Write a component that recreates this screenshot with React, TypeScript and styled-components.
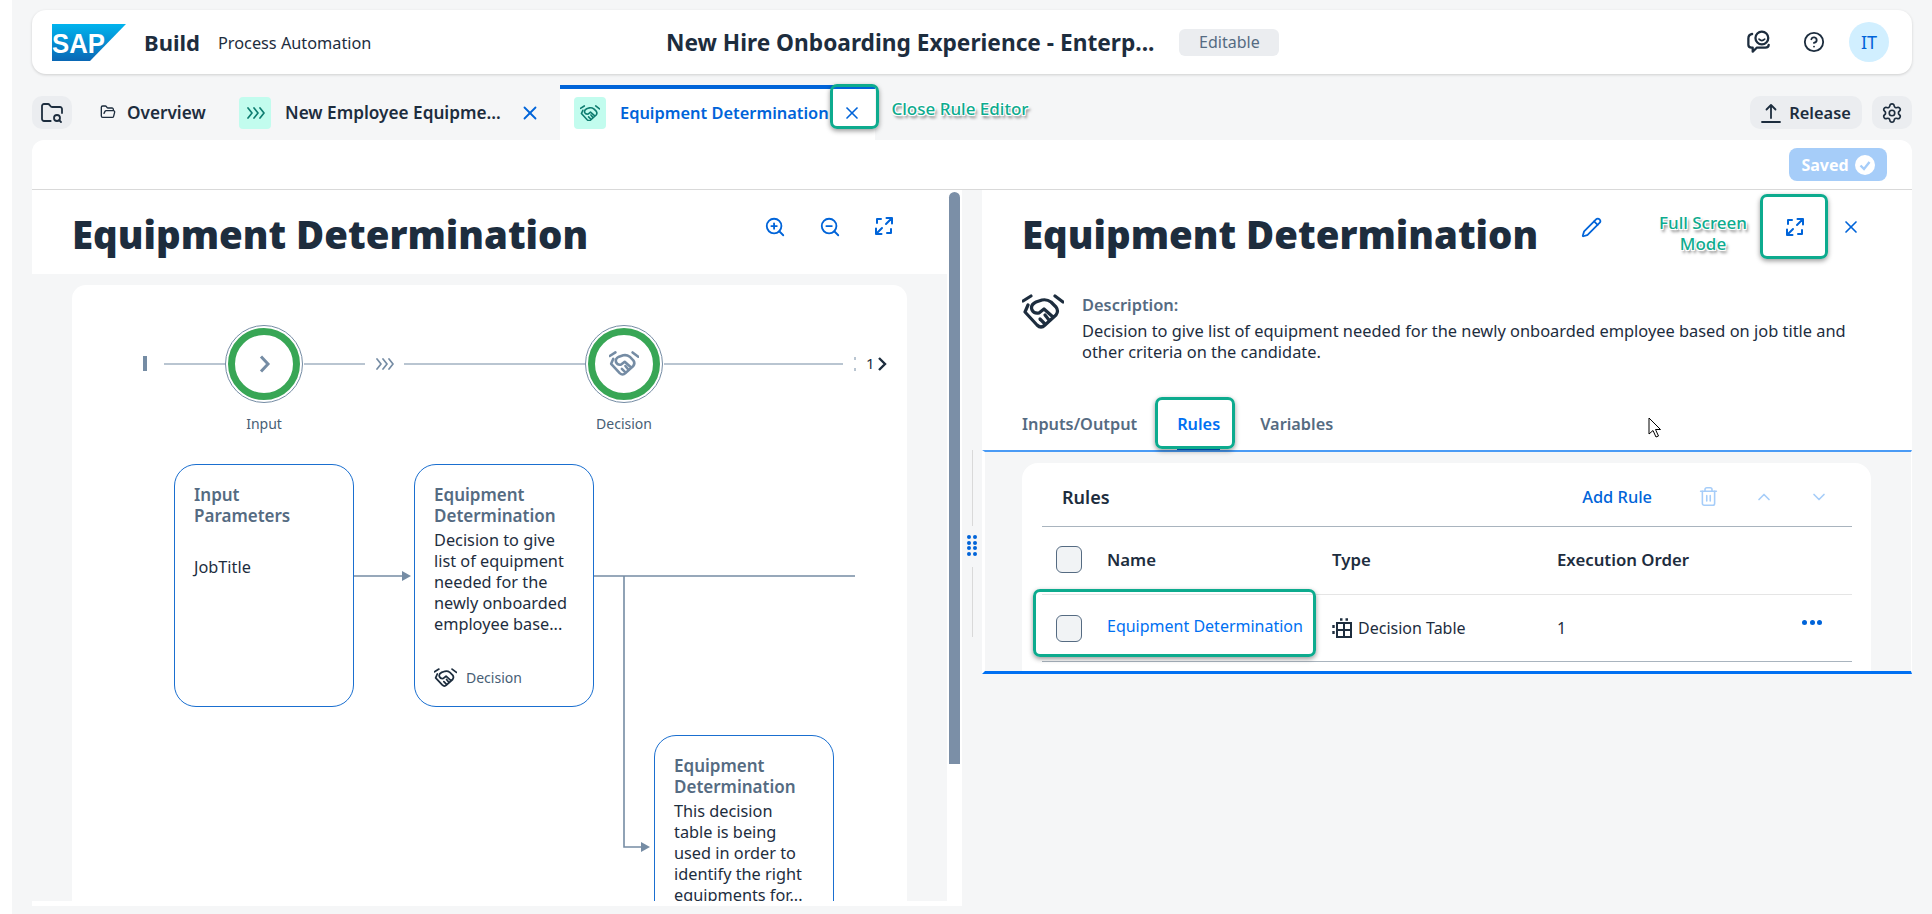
import React from "react";
import styled, { createGlobalStyle } from "styled-components";
import {
	ChevronDown,
	ChevronUp,
	CircleHelp,
	FolderOpen,
	FolderSearch,
	Pencil,
	Settings,
	Trash2,
	X,
	ZoomIn,
	ZoomOut,
} from "lucide-react";

const BLUE = "#0064d9";
const INK = "#1d2d3e";
const MUTED = "#556b82";
const PAGE = "#f5f6f7";
const LINE = "#758ca4";
const GREEN = "#0dab8e";

const GlobalStyle = createGlobalStyle`
	html, body {
		margin: 0;
		padding: 0;
		background: #ffffff;
	}
	body {
		font-family: "Noto Sans", "Liberation Sans", sans-serif;
		color: ${INK};
	}
	* {
		box-sizing: border-box;
	}
`;

const Shell = styled.div`
	position: relative;
	width: 1920px;
	height: 914px;
	margin-left: 12px;
	padding: 10px 20px 8px 20px;
	background: ${PAGE};
	overflow: hidden;
`;

/* top bar */
const Header = styled.header`
	height: 64px;
	display: flex;
	align-items: center;
	padding: 0 23px 0 20px;
	background: #ffffff;
	border-radius: 14px;
	box-shadow: 0 1px 3px rgba(0, 0, 0, 0.16);
`;

const Brand = styled.div`
	width: 614px;
	display: flex;
	align-items: center;
	flex: none;
`;

const BuildName = styled.span`
	margin-left: 18px;
	font-size: 22px;
	font-weight: 700;
`;

const ProductName = styled.span`
	margin-left: 18px;
	margin-top: 2px;
	font-size: 16.3px;
`;

const ProjectName = styled.span`
	font-size: 22.7px;
	font-weight: 700;
	white-space: nowrap;
`;

const StatusBadge = styled.span`
	width: 100px;
	height: 27px;
	margin-left: 25px;
	display: flex;
	align-items: center;
	justify-content: center;
	border-radius: 6px;
	background: #ebedf0;
	color: ${MUTED};
	font-size: 16px;
`;

const HeaderActions = styled.div`
	margin-left: auto;
	display: flex;
	align-items: center;
	gap: 24px;
`;

const FeedbackSlot = styled.span`
	display: flex;
	margin-right: 8px;
`;

const Avatar = styled.div`
	width: 40px;
	height: 40px;
	display: flex;
	align-items: center;
	justify-content: center;
	border-radius: 50%;
	background: #d1efff;
	color: ${BLUE};
	font-size: 18px;
`;

/* tab strip */
const TabStrip = styled.nav`
	height: 55px;
	margin-top: 11px;
	display: flex;
	align-items: flex-start;
`;

const GrayButton = styled.button<{ $width: number }>`
	width: ${p => p.$width}px;
	height: 33px;
	margin-top: 11px;
	padding: 0;
	display: flex;
	align-items: center;
	justify-content: center;
	gap: 8px;
	border: 0;
	border-radius: 10px;
	background: #ebedf0;
	color: ${INK};
	font-family: inherit;
	font-size: 16.4px;
	font-weight: 600;
`;

const Tab = styled.div<{ $width: number; $active?: boolean }>`
	width: ${p => p.$width}px;
	height: 55px;
	display: flex;
	align-items: center;
	flex: none;
	font-size: ${p => (p.$active ? 16.4 : 17.2)}px;
	font-weight: 600;
	white-space: nowrap;
	padding-bottom: 3px;
	color: ${p => (p.$active ? BLUE : INK)};
	background: ${p => (p.$active ? "#ffffff" : "transparent")};
	border-top: 4px solid ${p => (p.$active ? BLUE : "transparent")};
`;

const TabIconBox = styled.span<{ $left?: number }>`
	width: 32px;
	height: 32px;
	flex: none;
	margin-left: ${p => p.$left ?? 0}px;
	display: flex;
	align-items: center;
	justify-content: center;
	border-radius: 4px;
	background: #c2fcee;
	color: #0f7d71;
`;

const TabLabel = styled.span<{ $left: number }>`
	margin-left: ${p => p.$left}px;
	margin-top: -2px;
	display: flex;
`;

const TabClose = styled.span<{ $right: number }>`
	margin-left: auto;
	margin-right: ${p => p.$right}px;
	display: flex;
	color: ${BLUE};
`;

const StripEnd = styled.div`
	margin-left: auto;
	display: flex;
	gap: 10px;
`;

/* main editor */
const Editor = styled.main`
	height: 766px;
	display: flex;
	flex-direction: column;
	background: #ffffff;
	border-radius: 12px 12px 0 0;
`;

const EditorBar = styled.div`
	height: 50px;
	flex: none;
	display: flex;
	align-items: center;
	justify-content: flex-end;
	padding-right: 25px;
	border-bottom: 1px solid #d9d9d9;
`;

const SavedButton = styled.div`
	width: 98px;
	height: 33px;
	display: flex;
	align-items: center;
	justify-content: center;
	gap: 6px;
	border-radius: 8px;
	background: #a6cdf9;
	color: #ffffff;
	font-size: 16px;
	font-weight: 700;
`;

const Split = styled.div`
	flex: 1;
	min-height: 0;
	display: flex;
`;

const LeftPane = styled.section`
	width: 917px;
	flex: none;
	display: flex;
	flex-direction: column;
	padding-right: 2px;
	padding-bottom: 5px;
`;

const TitleBand = styled.div`
	height: 84px;
	flex: none;
	display: flex;
	align-items: center;
	padding: 4px 53px 0 40px;
	justify-content: space-between;
`;

const BigTitle = styled.h1`
	margin: 0;
	color: ${INK};
	font-size: 38.4px;
	line-height: 48px;
	font-weight: 900;
	letter-spacing: 0;
	white-space: nowrap;
`;

const ZoomTools = styled.div`
	display: flex;
	gap: 33px;
	color: ${BLUE};
	margin-top: -14px;
`;

const CanvasArea = styled.div`
	flex: 1;
	min-height: 0;
	padding: 11px 40px 0;
	background: ${PAGE};
`;

const CanvasCard = styled.div`
	height: 100%;
	display: flex;
	flex-direction: column;
	background: #ffffff;
	border-radius: 14px 14px 0 0;
`;

const Stepper = styled.div`
	position: relative;
	height: 164px;
	flex: none;
`;

const StepLabel = styled.span<{ $x: number }>`
	position: absolute;
	top: 130px;
	left: ${p => p.$x}px;
	transform: translateX(-50%);
	font-size: 14px;
	line-height: 18px;
	color: #475e75;
`;

const StepCount = styled.span`
	position: absolute;
	top: 68px;
	left: 794px;
	font-size: 15px;
	line-height: 20px;
`;

const Graph = styled.div`
	position: relative;
	flex: 1;
	width: 783px;
	overflow: hidden;
`;

const GraphLines = styled.svg`
	position: absolute;
	top: 0;
	left: 0;
`;

const NodeCard = styled.div<{ $x: number; $y: number; $h: number }>`
	position: absolute;
	left: ${p => p.$x}px;
	top: ${p => p.$y}px;
	width: 180px;
	height: ${p => p.$h}px;
	display: flex;
	flex-direction: column;
	padding: 19px 20px 19px 19px;
	background: #ffffff;
	border: 1px solid #1a6fd0;
	border-radius: 22px;
`;

const NodeTitle = styled.div`
	font-size: 17px;
	line-height: 21px;
	font-weight: 600;
	color: ${MUTED};
`;

const NodeText = styled.div<{ $gap: number }>`
	margin-top: ${p => p.$gap}px;
	font-size: 16.3px;
	line-height: 21px;
`;

const NodeFoot = styled.div`
	margin-top: auto;
	display: flex;
	align-items: center;
	gap: 9px;
	font-size: 14px;
	color: #475e75;
`;

const ScrollGutter = styled.div`
	width: 13px;
	flex: none;
	padding: 2px 2px 0 0;
`;

const ScrollThumb = styled.div`
	height: 572px;
	border-radius: 6px 6px 0 0;
	background: #7b8fa7;
`;

const Divider = styled.div`
	width: 20px;
	flex: none;
	display: flex;
	flex-direction: column;
	align-items: center;
	background: ${PAGE};
	padding: 260px 0 0;
`;

const DividerLine = styled.span<{ $h: number }>`
	width: 1px;
	height: ${p => p.$h}px;
	background: #d9d9d9;
`;

const DragDots = styled.span`
	margin: 9px 0 11px;
	display: grid;
	grid-template-columns: 4px 4px;
	gap: 1.5px 2px;

	i {
		width: 4px;
		height: 4px;
		border-radius: 50%;
		background: ${BLUE};
	}
`;

const RightPane = styled.section`
	flex: 1;
	min-width: 0;
	display: flex;
	flex-direction: column;
	background: ${PAGE};
`;

const RightTop = styled.div`
	height: 260px;
	flex: none;
	display: flex;
	flex-direction: column;
	padding: 0 0 0 40px;
	background: #ffffff;
`;

const RightHeading = styled.div`
	height: 84px;
	flex: none;
	display: flex;
	align-items: center;
	padding-top: 4px;
	color: ${BLUE};
`;

const HeadingAction = styled.span<{ $left: number }>`
	margin: -14px 0 0 ${p => p.$left}px;
	display: flex;
`;

const DescriptionRow = styled.div`
	margin-top: 20px;
	display: flex;
	gap: 18px;
`;

const DescriptionBody = styled.div`
	width: 790px;
	font-size: 16.4px;
	line-height: 21px;
`;

const DescriptionLabel = styled.div`
	font-weight: 600;
	color: ${MUTED};
	margin-bottom: 5px;
`;

const PaneTabs = styled.div`
	margin-top: auto;
	display: flex;
	height: 44px;
	gap: 40px;
`;

const PaneTab = styled.div<{ $active?: boolean }>`
	height: 44px;
	display: flex;
	align-items: center;
	font-size: 16.3px;
	font-weight: 600;
	color: ${p => (p.$active ? "#0070f2" : MUTED)};
	border-bottom: 3px solid ${p => (p.$active ? BLUE : "transparent")};
	padding-bottom: 5px;
`;

const RulesSection = styled.div`
	height: 224px;
	flex: none;
	padding: 11px 40px 0 37px;
	border-top: 2px solid #4a9bf5;
	border-bottom: 3px solid #0070f2;
	border-left: 3px solid #ffffff;
	border-right: 1px solid #ffffff;
	overflow: hidden;
`;

const RulesCard = styled.div`
	height: 230px;
	padding: 0 19px 0 20px;
	background: #ffffff;
	border-radius: 16px;
`;

const RulesHead = styled.div`
	height: 64px;
	display: flex;
	align-items: center;
	padding: 4px 0 0 20px;
	border-bottom: 1px solid #a9b4be;
`;

const RulesTitle = styled.h2`
	margin: 0;
	font-size: 18px;
	font-weight: 600;
`;

const RulesTools = styled.div`
	margin-left: auto;
	display: flex;
	align-items: center;
	color: #a6cdf9;
	padding-right: 23px;
	gap: 35px;
`;

const AddRule = styled.span`
	margin-right: 11px;
	color: ${BLUE};
	font-size: 16.4px;
	font-weight: 500;
`;

const RuleGrid = styled.div<{ $head?: boolean }>`
	display: grid;
	grid-template-columns: 65px 225px 225px 1fr 50px;
	align-items: center;
	height: ${p => (p.$head ? 68 : 67)}px;
	padding-bottom: ${p => (p.$head ? 3 : 0)}px;
	border-bottom: 1px solid ${p => (p.$head ? "#e5e5e5" : "#a9b4be")};
	font-size: ${p => (p.$head ? 16.8 : 16)}px;
	font-weight: ${p => (p.$head ? 600 : 400)};
`;

const CheckCell = styled.span`
	width: 26px;
	height: 27px;
	margin-left: 14px;
	border: 1px solid ${MUTED};
	border-radius: 6px;
	background: #f1f3f5;
`;

const RuleLink = styled.span`
	margin-top: -4px;
	color: #0070f2;
	white-space: nowrap;
`;

const TypeCell = styled.span`
	display: flex;
	align-items: center;
	gap: 6px;
`;

const MoreDots = styled.span`
	display: flex;
	gap: 2.5px;
	margin-top: -12px;

	i {
		width: 5px;
		height: 5px;
		border-radius: 50%;
		background: ${BLUE};
	}
`;

/* tutorial overlays */
const Callout = styled.div<{ $x: number; $y: number; $w: number; $h: number }>`
	position: absolute;
	left: ${p => p.$x - 12}px;
	top: ${p => p.$y}px;
	width: ${p => p.$w}px;
	height: ${p => p.$h}px;
	border: 3px solid ${GREEN};
	border-radius: 7px;
	box-shadow: 0 2px 5px rgba(0, 0, 0, 0.4);
`;

const CalloutNote = styled.div<{ $x: number; $y: number; $w: number }>`
	position: absolute;
	left: ${p => p.$x - 12}px;
	top: ${p => p.$y}px;
	width: ${p => p.$w}px;
	color: ${GREEN};
	font-size: 17px;
	line-height: 21px;
	font-weight: 500;
	text-align: center;
	text-shadow: -1px -1px 0 #fff, 1px -1px 0 #fff, -1px 1px 0 #fff, 1px 1px 0 #fff,
		0 0 2px #fff, 2px 3px 3px rgba(0, 0, 0, 0.55);
`;

const Pointer = styled.svg`
	position: absolute;
	left: 1636px;
	top: 417px;
`;

const SapLogo = () => (
	<svg width="74" height="37" viewBox="0 0 74 37">
		<defs>
			<linearGradient id="sapFill" x1="0" y1="0" x2="0" y2="1">
				<stop offset="0" stopColor="#00b4ee" />
				<stop offset="1" stopColor="#0a67b5" />
			</linearGradient>
		</defs>
		<polygon points="0,0 74,0 38,37 0,37" fill="url(#sapFill)" />
		<text
			x="0"
			y="29"
			fill="#ffffff"
			fontFamily="Liberation Sans"
			fontWeight="700"
			fontSize="27"
			textLength="53"
			lengthAdjust="spacingAndGlyphs"
		>
			SAP
		</text>
	</svg>
);

const Handshake = ({ size = 42, color = INK, stroke = 3.2 }: { size?: number; color?: string; stroke?: number }) => (
	<svg width={size} height={(size * 35) / 42} viewBox="0 0 42 35" fill="none" stroke={color} strokeWidth={stroke} strokeLinecap="round" strokeLinejoin="round">
		<path d="M1 7 9 2" />
		<path d="M33 2 41 8" />
		<path d="M6 11 3 18 15 31Q19 35 23 31L34 21Q37 17 34 13L29 8Q25 5 20 6L14 8Q8 11 10 16 12 20 17 19L22 15 31 23" />
		<path d="M18 25 23 30" />
		<path d="M23 21 27 26" />
	</svg>
);

const ExpandIcon = () => (
	<svg width="20" height="20" viewBox="0 0 20 20" fill="none" stroke={BLUE} strokeWidth="2" strokeLinecap="round" strokeLinejoin="round">
		<path d="M12.5 2H18V7.5M18 2 12 8" />
		<path d="M2 12.5V18H7.5M2 18 8 12" />
		<path d="M7 3H3V7" />
		<path d="M17 13V17H13" />
	</svg>
);

const TripleChevron = ({ color = "currentColor" }: { color?: string }) => (
	<svg width="19" height="12" viewBox="0 0 19 12" fill="none" stroke={color} strokeWidth="1.7" strokeLinecap="round" strokeLinejoin="round">
		<path d="M2 1 6 6 2 11" />
		<path d="M8 1 12 6 8 11" />
		<path d="M14 1 18 6 14 11" />
	</svg>
);

const FeedbackIcon = () => (
	<svg width="24" height="24" viewBox="0 0 21 21" fill="none" stroke={INK} strokeWidth="2" strokeLinecap="round" strokeLinejoin="round">
		<circle cx="13" cy="7" r="5.6" />
		<path d="M10.5 8Q13 10.5 15.5 8" strokeWidth="1.4" />
		<path d="M4.5 3.5Q1.2 4 1.2 7.5V13Q1.2 15.5 4 15.5H5V19L8.5 15.5H16Q19 15.5 19 13" />
	</svg>
);

const SaveCheck = () => (
	<svg width="20" height="20" viewBox="0 0 20 20">
		<circle cx="10" cy="10" r="10" fill="#ffffff" />
		<path d="M5.5 10.5 9 14 14.5 7" fill="none" stroke="#a6cdf9" strokeWidth="2.4" />
	</svg>
);

const UploadIcon = () => (
	<svg width="20" height="20" viewBox="0 0 20 20" fill="none" stroke={INK} strokeWidth="1.8" strokeLinecap="round" strokeLinejoin="round">
		<path d="M10 15V2M5.5 6.5 10 2l4.5 4.5" />
		<path d="M1 19H19" />
	</svg>
);

const TableIcon = () => (
	<svg width="20" height="20" viewBox="0 0 20 20" fill="none" stroke={INK} strokeWidth="2">
		<rect x="5" y="5" width="14" height="14" />
		<path d="M12 5V19M5 12H19" />
		<path d="M1.5 7V10M1.5 13V16M8 1.5H10.5M13.5 1.5H16" strokeWidth="2.4" />
	</svg>
);

const StepRing = ({ cx }: { cx: number }) => (
	<>
		<circle cx={cx} cy="79" r="38.5" fill="#ffffff" stroke={LINE} strokeWidth="1" />
		<circle cx={cx} cy="79" r="32.5" fill="#ffffff" stroke="#38a655" strokeWidth="7" />
	</>
);

const StepperDrawing = () => (
	<svg width="835" height="164" viewBox="0 0 835 164" fill="none">
		<rect x="71" y="71" width="4" height="15" fill={LINE} />
		<path d="M92 79H154M232 79H293M332 79H513M592 79H771" stroke={LINE} strokeWidth="1.2" />
		<path d="M783 72v3M783 83v3" stroke={LINE} strokeWidth="1" />
		<StepRing cx={192} />
		<path d="M189 71.5 196 79 189 86.5" stroke={LINE} strokeWidth="3" />
		<svg x="303" y="73" width="19" height="12">
			<TripleChevron color={LINE} />
		</svg>
		<StepRing cx={552} />
		<svg x="537" y="66" width="30" height="26">
			<Handshake size={30} color={LINE} stroke={3.6} />
		</svg>
		<path d="M807 73 813 79 807 85" stroke={INK} strokeWidth="2.4" />
	</svg>
);

const Connectors = () => (
	<GraphLines width="783" height="452" viewBox="0 0 783 452" fill="none">
		<path d="M281 127H332M521 127H783M552 127V398H572" stroke={LINE} strokeWidth="1.6" />
		<path d="M330 122 339 127 330 132Z" fill={LINE} />
		<path d="M569 393 578 398 569 403Z" fill={LINE} />
	</GraphLines>
);

export default function App() {
	return (
		<>
			<GlobalStyle />
			<Shell>
				<Header>
					<Brand>
						<SapLogo />
						<BuildName>Build</BuildName>
						<ProductName>Process Automation</ProductName>
					</Brand>
					<ProjectName>New Hire Onboarding Experience - Enterp...</ProjectName>
					<StatusBadge>Editable</StatusBadge>
					<HeaderActions>
						<FeedbackSlot>
							<FeedbackIcon />
						</FeedbackSlot>
						<CircleHelp size={22} strokeWidth={2} />
						<Avatar>IT</Avatar>
					</HeaderActions>
				</Header>

				<TabStrip>
					<GrayButton $width={40}>
						<FolderSearch size={24} strokeWidth={1.8} />
					</GrayButton>
					<Tab $width={167}>
						<TabLabel $left={28}>
							<FolderOpen size={16} strokeWidth={2} />
						</TabLabel>
						<TabLabel $left={11}>Overview</TabLabel>
					</Tab>
					<Tab $width={321}>
						<TabIconBox>
							<TripleChevron />
						</TabIconBox>
						<TabLabel $left={14}>New Employee Equipme...</TabLabel>
						<TabClose $right={19}>
							<X size={22} strokeWidth={2} />
						</TabClose>
					</Tab>
					<Tab $width={315} $active>
						<TabIconBox $left={14}>
							<Handshake size={20} color="#0f7d71" stroke={3.4} />
						</TabIconBox>
						<TabLabel $left={14}>Equipment Determination</TabLabel>
						<TabClose $right={13}>
							<X size={20} strokeWidth={2} />
						</TabClose>
					</Tab>
					<StripEnd>
						<GrayButton $width={112}>
							<UploadIcon />
							Release
						</GrayButton>
						<GrayButton $width={40}>
							<Settings size={22} strokeWidth={1.8} />
						</GrayButton>
					</StripEnd>
				</TabStrip>

				<Editor>
					<EditorBar>
						<SavedButton>
							Saved
							<SaveCheck />
						</SavedButton>
					</EditorBar>
					<Split>
						<LeftPane>
							<TitleBand>
								<BigTitle>Equipment Determination</BigTitle>
								<ZoomTools>
									<ZoomIn size={22} strokeWidth={2} />
									<ZoomOut size={22} strokeWidth={2} />
									<ExpandIcon />
								</ZoomTools>
							</TitleBand>
							<CanvasArea>
								<CanvasCard>
									<Stepper>
										<StepperDrawing />
										<StepLabel $x={192}>Input</StepLabel>
										<StepLabel $x={552}>Decision</StepLabel>
										<StepCount>1</StepCount>
									</Stepper>
									<Graph>
										<Connectors />
										<NodeCard $x={102} $y={15} $h={243}>
											<NodeTitle>
												Input
												<br />
												Parameters
											</NodeTitle>
											<NodeText $gap={31}>JobTitle</NodeText>
										</NodeCard>
										<NodeCard $x={342} $y={15} $h={243}>
											<NodeTitle>Equipment Determination</NodeTitle>
											<NodeText $gap={4}>
												Decision to give list of equipment needed for the newly onboarded employee base...
											</NodeText>
											<NodeFoot>
												<Handshake size={23} stroke={3.2} />
												Decision
											</NodeFoot>
										</NodeCard>
										<NodeCard $x={582} $y={286} $h={300}>
											<NodeTitle>Equipment Determination</NodeTitle>
											<NodeText $gap={4}>
												This decision table is being used in order to identify the right equipments for...
											</NodeText>
										</NodeCard>
									</Graph>
								</CanvasCard>
							</CanvasArea>
						</LeftPane>

						<ScrollGutter>
							<ScrollThumb />
						</ScrollGutter>

						<Divider>
							<DividerLine $h={76} />
							<DragDots>
								{Array.from({ length: 8 }, (_, i) => (
									<i key={i} />
								))}
							</DragDots>
							<DividerLine $h={70} />
						</Divider>

						<RightPane>
							<RightTop>
								<RightHeading>
									<BigTitle>Equipment Determination</BigTitle>
									<HeadingAction $left={43}>
										<Pencil size={21} strokeWidth={2} />
									</HeadingAction>
									<HeadingAction $left={183}>
										<ExpandIcon />
									</HeadingAction>
									<HeadingAction $left={36}>
										<X size={20} strokeWidth={2} />
									</HeadingAction>
								</RightHeading>
								<DescriptionRow>
									<Handshake />
									<DescriptionBody>
										<DescriptionLabel>Description:</DescriptionLabel>
										Decision to give list of equipment needed for the newly onboarded employee based on job title and other criteria on the candidate.
									</DescriptionBody>
								</DescriptionRow>
								<PaneTabs>
									<PaneTab>Inputs/Output</PaneTab>
									<PaneTab $active>Rules</PaneTab>
									<PaneTab>Variables</PaneTab>
								</PaneTabs>
							</RightTop>
							<RulesSection>
								<RulesCard>
									<RulesHead>
										<RulesTitle>Rules</RulesTitle>
										<RulesTools>
											<AddRule>Add Rule</AddRule>
											<Trash2 size={21} strokeWidth={1.8} />
											<ChevronUp size={20} strokeWidth={2} />
											<ChevronDown size={20} strokeWidth={2} />
										</RulesTools>
									</RulesHead>
									<RuleGrid $head>
										<CheckCell />
										<span>Name</span>
										<span>Type</span>
										<span>Execution Order</span>
										<span />
									</RuleGrid>
									<RuleGrid>
										<CheckCell />
										<RuleLink>Equipment Determination</RuleLink>
										<TypeCell>
											<TableIcon />
											Decision Table
										</TypeCell>
										<span>1</span>
										<MoreDots>
											<i />
											<i />
											<i />
										</MoreDots>
									</RuleGrid>
								</RulesCard>
							</RulesSection>
						</RightPane>
					</Split>
				</Editor>

				<Callout $x={830} $y={84} $w={49} $h={45} />
				<CalloutNote $x={878} $y={98} $w={164}>Close Rule Editor</CalloutNote>
				<Callout $x={1760} $y={194} $w={68} $h={65} />
				<CalloutNote $x={1650} $y={212} $w={106}>Full Screen Mode</CalloutNote>
				<Callout $x={1155} $y={397} $w={80} $h={52} />
				<Callout $x={1033} $y={589} $w={283} $h={68} />
				<Pointer width="14" height="21" viewBox="0 0 14 21">
					<path d="M1 1V17L5 13.5 8 20 10.5 19 7.5 12.5H12.5Z" fill="#ffffff" stroke="#000000" strokeWidth="1" />
				</Pointer>
			</Shell>
		</>
	);
}
